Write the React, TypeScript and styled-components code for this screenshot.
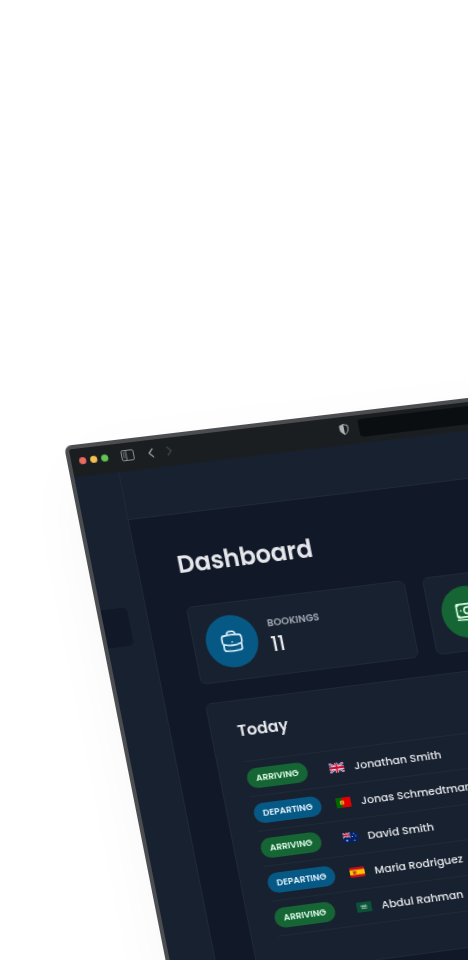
import React from "react";
import styled, { createGlobalStyle } from "styled-components";
import { HiOutlineBriefcase, HiOutlineBanknotes, HiOutlineCalendarDays, HiOutlineChartBar } from "react-icons/hi2";

const GlobalStyle = createGlobalStyle`
  *, *::before, *::after { box-sizing: border-box; }
  html, body { margin: 0; background: #fff; }
  body { font-family: Poppins, Inter, "Noto Sans", sans-serif; color: #e5e7eb; }
  h1, h2, p, ul { margin: 0; padding: 0; }
`;

const Scene = styled.main`
  min-height: 100vh;
  height: 100vh;
  overflow: hidden;
  padding: 446px 0 0 64px;
`;

const BrowserWindow = styled.section`
  width: 1070px;
  min-height: 720px;
  display: flex;
  flex-direction: column;
  overflow: hidden;
  border: 4px solid #4b4d50;
  border-radius: 7px;
  background: #18212f;
  box-shadow: 0 20px 70px -14px rgba(0, 0, 0, 0.05);
  transform-origin: 0 0;
  transform: matrix3d(1, -0.119, 0, 0.000028, 0.1975, 1, 0, 0, 0, 0, 1, 0, 0, 0, 0, 1);
`;

const TitleBar = styled.header`
  height: 28px;
  display: flex;
  align-items: center;
  padding: 0 6px 3px 8px;
  background: #1a1e20;
`;

const Lights = styled.div`
  display: flex;
  gap: 4px;
  margin-right: 10px;
`;

const Light = styled.button<{ $color: string }>`
  width: 7px;
  height: 7px;
  padding: 0;
  border: 0;
  border-radius: 50%;
  background: ${(p) => p.$color};
`;

const BarButton = styled.button<{ $tone: string }>`
  display: grid;
  place-items: center;
  width: 18px;
  height: 18px;
  padding: 0;
  border: 0;
  background: none;
  color: ${(p) => p.$tone};
`;

const NavButtons = styled.div`
  display: flex;
  margin-left: 6px;
`;

const AddressGroup = styled.div`
  flex: 1;
  display: flex;
  align-items: center;
  gap: 6px;
  margin-left: 159px;
  margin-right: 290px;
`;

const Address = styled.input`
  flex: 1;
  height: 18px;
  border: 0;
  border-radius: 4px;
  background: #0a0e11;
  color: #9ca3af;
  font: inherit;
  font-size: 10px;
`;

const Shell = styled.div`
  flex: 1;
  display: grid;
  grid-template-columns: 45px 1fr;
`;

const Sidebar = styled.nav`
  padding-top: 133px;
  border-right: 1px solid #1f2937;
`;

const SidebarLink = styled.a`
  display: block;
  width: 26px;
  height: 38px;
  border-radius: 0 5px 5px 0;
  background: #111827;
`;

const Page = styled.div`
  display: flex;
  flex-direction: column;
`;

const TopBar = styled.div`
  height: 48px;
  border-bottom: 1px solid #1f2937;
`;

const Content = styled.div`
  flex: 1;
  padding: 37px 40px 40px 39px;
  background: #111827;
`;

const Title = styled.h1`
  margin-bottom: 29px;
  font-size: 24px;
  font-weight: 600;
  line-height: 26px;
`;

const Grid = styled.div`
  display: grid;
  grid-template-columns: repeat(4, 1fr);
  gap: 19px 18px;
`;

const Stat = styled.article`
  display: grid;
  grid-template-columns: 52px 1fr;
  align-items: center;
  column-gap: 12px;
  padding: 12px;
  border: 1px solid #1f2937;
  border-radius: 6px;
  background: #18212f;
`;

const StatIcon = styled.div<{ $bg: string; $fg: string }>`
  display: grid;
  place-items: center;
  height: 52px;
  border-radius: 50%;
  background: ${(p) => p.$bg};
  color: ${(p) => p.$fg};
  font-size: 26px;
`;

const StatLabel = styled.h2`
  color: #9ca3af;
  font-size: 10px;
  font-weight: 600;
  line-height: 16px;
  text-transform: uppercase;
`;

const StatValue = styled.p`
  font-size: 20px;
  font-weight: 500;
  line-height: 26px;
`;

const Panel = styled.section`
  grid-column: span 2;
  min-height: 273px;
  padding: 18px 26px;
  border: 1px solid #1f2937;
  border-radius: 6px;
  background: #18212f;
`;

const PanelTitle = styled.h2`
  margin-bottom: 18px;
  font-size: 16px;
  font-weight: 600;
  line-height: 24px;
`;

const List = styled.ul`
  list-style: none;
  border-top: 1px solid #1f2937;
`;

const Row = styled.li`
  display: grid;
  grid-template-columns: 73px 15px 1fr;
  align-items: center;
  gap: 10px;
  height: 35px;
  border-bottom: 1px solid #1f2937;
  font-size: 11px;
  font-weight: 500;
`;

const Tag = styled.span<{ $kind: Kind }>`
  justify-self: start;
  padding: 0 9px;
  border-radius: 10px;
  background: ${(p) => (p.$kind === "arriving" ? "#166534" : "#075985")};
  color: ${(p) => (p.$kind === "arriving" ? "#dcfce7" : "#e0f2fe")};
  font-size: 9px;
  font-weight: 600;
  line-height: 20px;
  text-transform: uppercase;
`;

const FlagSvg = styled.svg`
  display: block;
  width: 15px;
  height: 10px;
  border-radius: 1px;
`;

type Kind = "arriving" | "departing";
type Country = "gb" | "pt" | "au" | "es" | "sa";

const Jack = () => (
  <>
    <path fill="#012169" d="M0 0h30v20H0z" />
    <path stroke="#fff" strokeWidth="4" d="M0 0l30 20M30 0L0 20" />
    <path stroke="#c8102e" strokeWidth="1.6" d="M0 0l30 20M30 0L0 20" />
    <path stroke="#fff" strokeWidth="6.5" d="M15 0v20M0 10h30" />
    <path stroke="#c8102e" strokeWidth="4" d="M15 0v20M0 10h30" />
  </>
);

const flagArt: Record<Country, React.ReactNode> = {
  gb: <Jack />,
  pt: (
    <>
      <path fill="#e00000" d="M0 0h30v20H0z" />
      <path fill="#006600" d="M0 0h12v20H0z" />
      <circle cx="12" cy="10" r="4.5" fill="#f7e017" />
      <path fill="#d81e1e" d="M9.5 7.5h5v3.5a2.5 2.5 0 0 1-5 0z" />
      <path fill="#fff" d="M11 9h2v2.5h-2z" />
    </>
  ),
  au: (
    <>
      <path fill="#012169" d="M0 0h30v20H0z" />
      <g transform="scale(.5)"><Jack /></g>
      <g fill="#fff">
        <circle cx="7.5" cy="15.5" r="1.7" />
        <circle cx="22.5" cy="3.5" r="1" />
        <circle cx="26" cy="8" r="1" />
        <circle cx="19" cy="9" r="1" />
        <circle cx="22.5" cy="16.5" r="1.2" />
      </g>
    </>
  ),
  es: (
    <>
      <path fill="#c60b1e" d="M0 0h30v20H0z" />
      <path fill="#ffc400" d="M0 5h30v10H0z" />
      <path fill="#ad3a20" d="M6 7h1v6H6zM12 7h1v6h-1zM7.5 8h4v4a2 2 0 0 1-4 0z" />
      <path fill="#c8870b" d="M8 6h3v1.5H8z" />
    </>
  ),
  sa: (
    <>
      <path fill="#0b5338" d="M0 0h30v20H0z" />
      <path stroke="#dfeee6" strokeWidth="1" fill="none" d="M9 6v2.5h3V6M14 5v3.5h3V6M19 5v3.5h2.5M10 10h9M9 13h12" />
    </>
  ),
};

const Flag = ({ country, label }: { country: Country; label: string }) => (
  <FlagSvg viewBox="0 0 30 20" role="img" aria-label={label}>
    {flagArt[country]}
  </FlagSvg>
);

const guests: { kind: Kind; country: Country; label: string; name: string }[] = [
  { kind: "arriving", country: "gb", label: "United Kingdom", name: "Jonathan Smith" },
  { kind: "departing", country: "pt", label: "Portugal", name: "Jonas Schmedtmann" },
  { kind: "arriving", country: "au", label: "Australia", name: "David Smith" },
  { kind: "departing", country: "es", label: "Spain", name: "Maria Rodriguez" },
  { kind: "arriving", country: "sa", label: "Saudi Arabia", name: "Abdul Rahman" },
];

export default function App() {
  return (
    <>
      <GlobalStyle />
      <Scene>
        <BrowserWindow>
          <TitleBar>
            <Lights>
              <Light $color="#ed6a5e" aria-label="Close" />
              <Light $color="#f5bf4f" aria-label="Minimise" />
              <Light $color="#61c554" aria-label="Zoom" />
            </Lights>
            <BarButton $tone="#8b8e90" aria-label="Toggle sidebar">
              <svg width="13" height="11" viewBox="0 0 13 11" fill="none" stroke="currentColor">
                <rect x="0.5" y="0.5" width="12" height="10" rx="1.5" />
                <path d="M5 .5v10M2 3h1.5M2 5h1.5M2 7h1.5" />
              </svg>
            </BarButton>
            <NavButtons>
              <BarButton $tone="#a5a7a8" aria-label="Back">
                <svg width="6" height="10" viewBox="0 0 6 10" fill="none" stroke="currentColor" strokeWidth="1.2">
                  <path d="M5 .7L1 5l4 4.3" />
                </svg>
              </BarButton>
              <BarButton $tone="#44484a" aria-label="Forward">
                <svg width="6" height="10" viewBox="0 0 6 10" fill="none" stroke="currentColor" strokeWidth="1.2">
                  <path d="M1 .7L5 5 1 9.3" />
                </svg>
              </BarButton>
            </NavButtons>
            <AddressGroup>
              <BarButton $tone="#b0b3b4" aria-label="Privacy report">
                <svg width="10" height="11" viewBox="0 0 10 11" fill="none" stroke="currentColor">
                  <path d="M5 .6l4 1.3v3.6c0 2.2-1.6 3.8-4 4.9C2.6 9.3 1 7.7 1 5.5V1.9z" />
                  <path fill="currentColor" stroke="none" d="M5 .6v9.8C2.6 9.3 1 7.7 1 5.5V1.9z" />
                </svg>
              </BarButton>
              <Address aria-label="Address" />
            </AddressGroup>
          </TitleBar>
          <Shell>
            <Sidebar>
              <SidebarLink href="#dashboard" aria-label="Dashboard" />
            </Sidebar>
            <Page>
              <TopBar />
              <Content>
                <Title>Dashboard</Title>
                <Grid>
                  <Stat>
                    <StatIcon $bg="#075985" $fg="#e0f2fe"><HiOutlineBriefcase /></StatIcon>
                    <div>
                      <StatLabel>Bookings</StatLabel>
                      <StatValue>11</StatValue>
                    </div>
                  </Stat>
                  <Stat>
                    <StatIcon $bg="#166534" $fg="#dcfce7"><HiOutlineBanknotes /></StatIcon>
                  </Stat>
                  <Stat>
                    <StatIcon $bg="#3730a3" $fg="#e0e7ff"><HiOutlineCalendarDays /></StatIcon>
                  </Stat>
                  <Stat>
                    <StatIcon $bg="#854d0e" $fg="#fef9c3"><HiOutlineChartBar /></StatIcon>
                  </Stat>
                  <Panel>
                    <PanelTitle>Today</PanelTitle>
                    <List>
                      {guests.map((g) => (
                        <Row key={g.name}>
                          <Tag $kind={g.kind}>{g.kind}</Tag>
                          <Flag country={g.country} label={g.label} />
                          <span>{g.name}</span>
                        </Row>
                      ))}
                    </List>
                  </Panel>
                  <Panel />
                </Grid>
              </Content>
            </Page>
          </Shell>
        </BrowserWindow>
      </Scene>
    </>
  );
}
